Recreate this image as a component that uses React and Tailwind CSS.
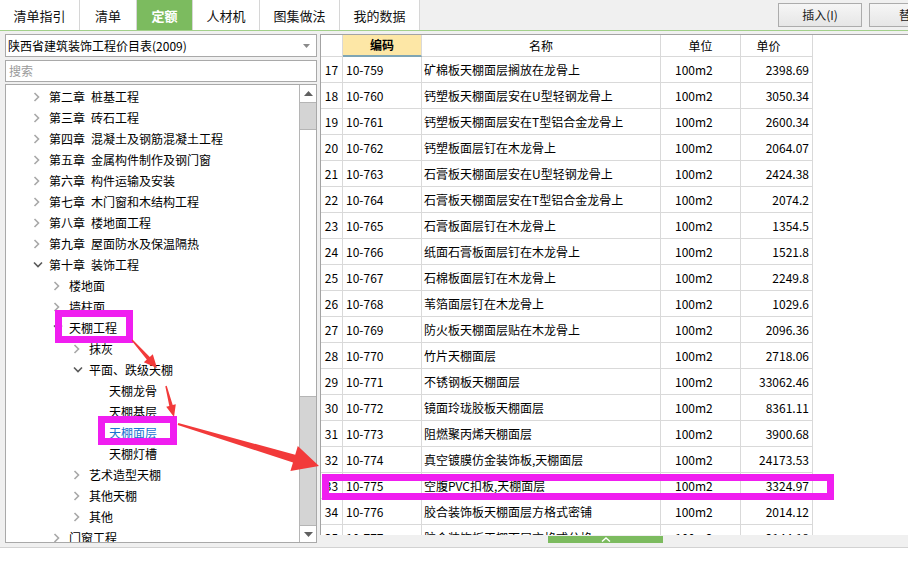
import React from "react";

const tabs = ["清单指引", "清单", "定额", "人材机", "图集做法", "我的数据"];
const tabW = ["w-[80px]", "w-[57px]", "w-[56px]", "w-[67px]", "w-[80px]", "w-[80px]"];

const tree = [
  { l: 1, s: "c", a: "第二章", b: "桩基工程" },
  { l: 1, s: "c", a: "第三章", b: "砖石工程" },
  { l: 1, s: "c", a: "第四章", b: "混凝土及钢筋混凝土工程" },
  { l: 1, s: "c", a: "第五章", b: "金属构件制作及钢门窗" },
  { l: 1, s: "c", a: "第六章", b: "构件运输及安装" },
  { l: 1, s: "c", a: "第七章", b: "木门窗和木结构工程" },
  { l: 1, s: "c", a: "第八章", b: "楼地面工程" },
  { l: 1, s: "c", a: "第九章", b: "屋面防水及保温隔热" },
  { l: 1, s: "e", a: "第十章", b: "装饰工程" },
  { l: 2, s: "c", a: "楼地面" },
  { l: 2, s: "c", a: "墙柱面" },
  { l: 2, s: "e", a: "天棚工程" },
  { l: 3, s: "c", a: "抹灰" },
  { l: 3, s: "e", a: "平面、跌级天棚" },
  { l: 4, s: "n", a: "天棚龙骨" },
  { l: 4, s: "n", a: "天棚基层" },
  { l: 4, s: "n", a: "天棚面层", sel: true },
  { l: 4, s: "n", a: "天棚灯槽" },
  { l: 3, s: "c", a: "艺术造型天棚" },
  { l: 3, s: "c", a: "其他天棚" },
  { l: 3, s: "c", a: "其他" },
  { l: 2, s: "c", a: "门窗工程" },
];

const indent = { 1: "pl-[27px]", 2: "pl-[47px]", 3: "pl-[67px]", 4: "pl-[87px]" };

const rows = [
  [17, "10-759", "矿棉板天棚面层搁放在龙骨上", "2398.69"],
  [18, "10-760", "钙塑板天棚面层安在U型轻钢龙骨上", "3050.34"],
  [19, "10-761", "钙塑板天棚面层安在T型铝合金龙骨上", "2600.34"],
  [20, "10-762", "钙塑板面层钉在木龙骨上", "2064.07"],
  [21, "10-763", "石膏板天棚面层安在U型轻钢龙骨上", "2424.38"],
  [22, "10-764", "石膏板天棚面层安在T型铝合金龙骨上", "2074.2"],
  [23, "10-765", "石膏板面层钉在木龙骨上", "1354.5"],
  [24, "10-766", "纸面石膏板面层钉在木龙骨上", "1521.8"],
  [25, "10-767", "石棉板面层钉在木龙骨上", "2249.8"],
  [26, "10-768", "苇箔面层钉在木龙骨上", "1029.6"],
  [27, "10-769", "防火板天棚面层贴在木龙骨上", "2096.36"],
  [28, "10-770", "竹片天棚面层", "2718.06"],
  [29, "10-771", "不锈钢板天棚面层", "33062.46"],
  [30, "10-772", "镜面玲珑胶板天棚面层", "8361.11"],
  [31, "10-773", "阻燃聚丙烯天棚面层", "3900.68"],
  [32, "10-774", "真空镀膜仿金装饰板,天棚面层", "24173.53"],
  [33, "10-775", "空腹PVC扣板,天棚面层", "3324.97"],
  [34, "10-776", "胶合装饰板天棚面层方格式密铺", "2014.12"],
  [35, "10-777", "胶合装饰板天棚面层方格式分格", "2144.18"],
];

function Chevron({ s }) {
  if (s === "c")
    return (
      <svg width="7" height="10" viewBox="0 0 7 10">
        <polyline points="1.5,1 5.5,5 1.5,9" fill="none" stroke="#a8a8a8" strokeWidth="1.6" />
      </svg>
    );
  if (s === "e")
    return (
      <svg width="10" height="7" viewBox="0 0 10 7">
        <polyline points="1,1.5 5,5.5 9,1.5" fill="none" stroke="#5a5a5a" strokeWidth="1.6" />
      </svg>
    );
  return null;
}

function TreeRow({ r }) {
  return (
    <div className={`flex items-center h-[21px] whitespace-nowrap ${indent[r.l]}`}>
      <div className="w-[16px] h-[21px] flex items-center shrink-0">
        <Chevron s={r.s} />
      </div>
      {r.sel ? (
        <span className="text-[12px] leading-none text-[#1a72d0] underline underline-offset-1">{r.a}</span>
      ) : (
        <span className="text-[12px] leading-none text-black">
          {r.a}
          {r.b && <span className="ml-[6px]">{r.b}</span>}
        </span>
      )}
    </div>
  );
}

function TableRow({ r }) {
  return (
    <div className="flex h-[26px] w-[492px] border-b border-[#d9d9d9] text-[12px] leading-none text-black">
      <div className="w-[22px] border-r border-[#d9d9d9] flex items-center justify-center">{r[0]}</div>
      <div className="w-[79px] border-r border-[#d9d9d9] flex items-center pl-[3px]">{r[1]}</div>
      <div className="w-[239px] border-r border-[#d9d9d9] flex items-center pl-[2px] whitespace-nowrap">{r[2]}</div>
      <div className="w-[80px] border-r border-[#d9d9d9] flex items-center pl-[14px]">100m2</div>
      <div className="w-[72px] border-r border-[#d9d9d9] flex items-center justify-end pr-[3px]">{r[3]}</div>
    </div>
  );
}

export default function App() {
  return (
    <div className="relative w-[908px] h-[568px] bg-white overflow-hidden font-['Noto_Sans_CJK_SC','Noto_Sans',sans-serif]">
      <div className="h-[548px] bg-[#f0f0f0] border-b border-[#d2d2d2] flex flex-col">
        {/* tab bar */}
        <div className="h-[31px] flex border-b border-[#a3d08b] shrink-0">
          {tabs.map((t, i) => (
            <div
              key={t}
              className={`${tabW[i]} h-[30px] shrink-0 flex items-center justify-center text-[13px] leading-none border-r border-[#d6d6d6] ${
                i === 2 ? "bg-[#7cbb5f] text-white font-bold" : "bg-white text-[#111]"
              }`}
            >
              {t}
            </div>
          ))}
          <div className="flex gap-[7px] ml-[358px] mt-[3px] shrink-0">
            <div className="w-[84px] h-[24px] border border-[#acacac] bg-gradient-to-b from-[#f6f6f6] to-[#e6e6e6] flex items-center justify-center text-[12px] leading-none text-[#222]">
              插入(I)
            </div>
            <div className="w-[84px] h-[24px] border border-[#acacac] bg-gradient-to-b from-[#f6f6f6] to-[#e6e6e6] flex items-center justify-center text-[12px] leading-none text-[#222]">
              替换
            </div>
          </div>
        </div>

        <div className="flex flex-1 min-h-0">
          {/* left panel */}
          <div className="w-[320px] shrink-0 pl-[5px] pr-[3px] pt-[3px] flex flex-col">
            <div className="h-[23px] bg-white border border-[#a9a9a9] flex items-center pl-[2px] pr-[6px]">
              <span className="text-[12px] leading-none text-black flex-1">陕西省建筑装饰工程价目表(2009)</span>
              <svg width="7" height="4" viewBox="0 0 7 4">
                <polygon points="0,0 7,0 3.5,4" fill="#8a8a8a" />
              </svg>
            </div>
            <div className="h-[22px] mt-[3px] bg-white border border-[#a9a9a9] flex items-center pl-[3px]">
              <span className="text-[12px] leading-none text-[#9a9a9a]">搜索</span>
            </div>
            <div className="h-[459px] mt-[2px] bg-white border border-[#a9a9a9] flex overflow-hidden">
              <div className="flex-1 pt-[1px] overflow-hidden">
                {tree.map((r, i) => (
                  <TreeRow key={i} r={r} />
                ))}
              </div>
              <div className="w-[17px] shrink-0 border-l border-[#b5b5b5] flex flex-col">
                <div className="h-[18px] bg-white border-b border-[#b5b5b5] flex items-center justify-center">
                  <svg width="9" height="5" viewBox="0 0 9 5">
                    <polygon points="0,5 9,5 4.5,0" fill="#606060" />
                  </svg>
                </div>
                <div className="h-[26px] bg-[#d4d4d4]" />
                <div className="h-[268px] bg-white border-y border-[#b5b5b5]" />
                <div className="flex-1 bg-[#d4d4d4]" />
                <div className="h-[17px] bg-white border-t border-[#b5b5b5] flex items-center justify-center">
                  <svg width="9" height="5" viewBox="0 0 9 5">
                    <polygon points="0,0 9,0 4.5,5" fill="#606060" />
                  </svg>
                </div>
              </div>
            </div>
          </div>

          {/* right panel */}
          <div className="flex-1 pt-[3px] flex flex-col">
            <div className="h-[501px] bg-white border-l border-t border-[#a3a3a3] overflow-hidden">
              <div className="flex h-[22px] w-[492px] text-[12px] leading-none text-black">
                <div className="w-[22px] border-r border-b border-[#d9d9d9]" />
                <div className="w-[79px] border-r border-[#d9d9d9] bg-[#fde7a6] border-b-2 border-b-[#7ea5b4] flex items-center justify-center font-bold">
                  编码
                </div>
                <div className="w-[239px] border-r border-b border-[#d9d9d9] flex items-center justify-center">名称</div>
                <div className="w-[80px] border-r border-b border-[#d9d9d9] flex items-center justify-center">单位</div>
                <div className="w-[72px] border-r border-b border-[#d9d9d9] flex items-center justify-center pr-[16px]">单价</div>
              </div>
              {rows.map((r) => (
                <TableRow key={r[0]} r={r} />
              ))}
            </div>
            <div className="h-[12px] pt-[1px]">
              <div className="ml-[228px] w-[115px] h-[7px] bg-[#7cbb5f] flex items-center justify-center">
                <svg width="10" height="5" viewBox="0 0 10 5">
                  <polyline points="1,4.5 5,1 9,4.5" fill="none" stroke="#ffffff" strokeWidth="1.4" />
                </svg>
              </div>
            </div>
          </div>
        </div>
      </div>

      {/* annotation overlays */}
      <div className="absolute left-[55px] top-[310px] w-[78px] h-[33px] border-[7px] border-[#f01ef0] pointer-events-none" />
      <div className="absolute left-[98px] top-[416px] w-[79px] h-[29px] border-[7px] border-[#f01ef0] pointer-events-none" />
      <div className="absolute left-[322px] top-[474px] w-[512px] h-[26px] border-x-[7px] border-y-[7px] border-[#f01ef0] pointer-events-none" />
      <svg className="absolute left-0 top-0 pointer-events-none" width="908" height="568" viewBox="0 0 908 568">
        <polygon
          points="132.5,339.5 149.8,357 152.8,354.3 157,368 143.8,362.3 146.8,359.6 131.5,340.5"
          fill="#f23a3a"
        />
        <polygon
          points="166.7,385.8 172.7,405 175.8,404.2 174,417 166.2,406.7 169.3,405.9 165.3,386.2"
          fill="#f23a3a"
        />
        <polygon
          points="178.3,423 295.2,454.8 297.8,446.1 319,466 290.4,471.1 293,462.4 177.7,425"
          fill="#f23a3a"
        />
      </svg>
    </div>
  );
}
